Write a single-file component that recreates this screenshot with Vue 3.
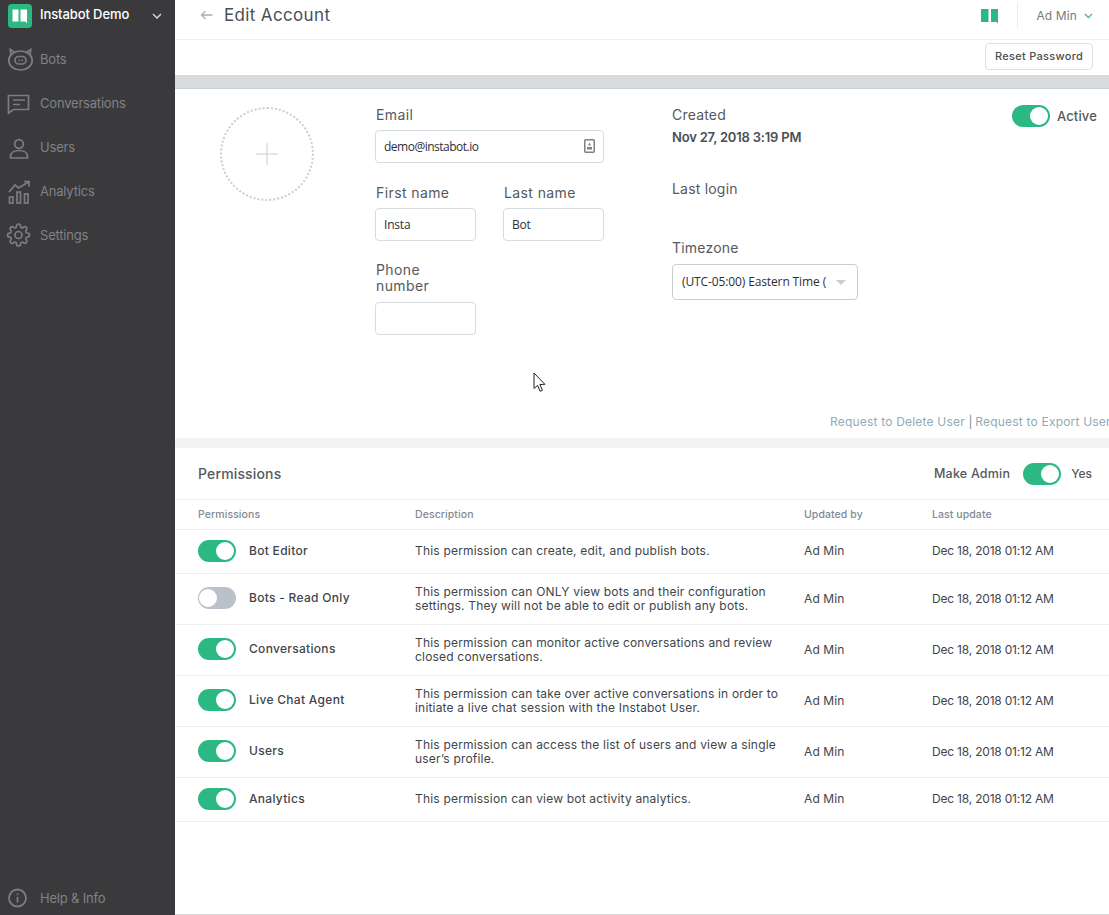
<script setup>
const nav = [
  { label: 'Bots', icon: 'bot' },
  { label: 'Conversations', icon: 'chat' },
  { label: 'Users', icon: 'user' },
  { label: 'Analytics', icon: 'chart' },
  { label: 'Settings', icon: 'gear' },
]
const rows = [
  { name: 'Bot Editor', on: true, h: 'short', desc: ['This permission can create, edit, and publish bots.'] },
  { name: 'Bots - Read Only', on: false, h: 'tall', desc: ['This permission can ONLY view bots and their configuration', 'settings. They will not be able to edit or publish any bots.'] },
  { name: 'Conversations', on: true, h: 'tall', desc: ['This permission can monitor active conversations and review', 'closed conversations.'] },
  { name: 'Live Chat Agent', on: true, h: 'tall', desc: ['This permission can take over active conversations in order to', 'initiate a live chat session with the Instabot User.'] },
  { name: 'Users', on: true, h: 'tall', desc: ['This permission can access the list of users and view a single', 'user\u2019s profile.'] },
  { name: 'Analytics', on: true, h: 'short', desc: ['This permission can view bot activity analytics.'] },
]
</script>

<template>
  <div class="app">
    <aside class="side">
      <div class="brand">
        <span class="logo">
          <svg width="24" height="24" viewBox="0 0 24 24">
            <rect width="24" height="24" rx="4" fill="#2cb883" />
            <path d="M4.500 5.500h6v12h-6zM12.500 5.500h6.500v14l-1.500-2h-5z" fill="#fff" />
          </svg>
        </span>
        <span class="brand-name">Instabot Demo</span>
        <svg class="brand-chev" width="10" height="6" viewBox="0 0 10 6"><path d="M1 1l4 4 4-4" fill="none" stroke="#d5d5d5" stroke-width="1.5" /></svg>
      </div>
      <nav class="nav">
        <a v-for="n in nav" :key="n.label" class="nav-item">
          <svg class="nav-ico" width="26" height="26" viewBox="0 0 26 26" fill="none" stroke="#7b7d7f" stroke-width="1.7">
            <template v-if="n.icon === 'bot'">
              <ellipse cx="14.500" cy="14.500" rx="11.700" ry="9.500" />
              <rect x="9" y="10.500" width="11" height="7.500" rx="3.700" />
              <path d="M4.800 8.500L4.300 3.500l4.200 2.800M24.200 8.500l.5-5-4.200 2.800" />
              <path d="M12.500 14.300h1.500M15.500 14.300H17" />
            </template>
            <template v-else-if="n.icon === 'chat'">
              <path d="M2.500 5.500h20v14H7.500l-5 3.500z" />
              <path d="M7 10h12M7 14.500h7" />
            </template>
            <template v-else-if="n.icon === 'user'">
              <circle cx="13" cy="10" r="4.300" />
              <path d="M4.500 24v-1.500c0-4 4-6 8.500-6s8.500 2 8.500 6V24z" />
            </template>
            <template v-else-if="n.icon === 'chart'">
              <path d="M3 14l6-7 3.500 3 10-6M18 3.500h5v5" />
              <rect x="3.500" y="19" width="3.500" height="6" />
              <rect x="11" y="14" width="3.500" height="11" />
              <rect x="18.500" y="16" width="3.500" height="9" />
            </template>
            <template v-else>
              <g transform="translate(.5 1)">
                <circle cx="12" cy="12" r="3.500" />
                <path d="M19.400 15a1.650 1.650 0 0 0 .33 1.820l.06.06a2 2 0 0 1 0 2.830 2 2 0 0 1-2.830 0l-.06-.06a1.650 1.650 0 0 0-1.820-.33 1.650 1.650 0 0 0-1 1.510V21a2 2 0 0 1-2 2 2 2 0 0 1-2-2v-.09A1.650 1.650 0 0 0 9 19.400a1.650 1.650 0 0 0-1.820.33l-.06.06a2 2 0 0 1-2.830 0 2 2 0 0 1 0-2.830l.06-.06a1.650 1.650 0 0 0 .33-1.820 1.650 1.650 0 0 0-1.510-1H3a2 2 0 0 1-2-2 2 2 0 0 1 2-2h.09A1.650 1.650 0 0 0 4.600 9a1.650 1.650 0 0 0-.33-1.820l-.06-.06a2 2 0 0 1 0-2.830 2 2 0 0 1 2.830 0l.06.06a1.650 1.650 0 0 0 1.820.33H9a1.650 1.650 0 0 0 1-1.510V3a2 2 0 0 1 2-2 2 2 0 0 1 2 2v.09a1.650 1.650 0 0 0 1 1.510 1.650 1.650 0 0 0 1.820-.33l.06-.06a2 2 0 0 1 2.830 0 2 2 0 0 1 0 2.830l-.06.06a1.650 1.650 0 0 0-.33 1.820V9a1.650 1.650 0 0 0 1.510 1H21a2 2 0 0 1 2 2 2 2 0 0 1-2 2h-.09a1.650 1.650 0 0 0-1.510 1z" />
              </g>
            </template>
          </svg>
          <span>{{ n.label }}</span>
        </a>
      </nav>
      <a class="nav-item help">
        <svg class="nav-ico" width="26" height="26" viewBox="0 0 26 26" fill="none" stroke="#7b7d7f" stroke-width="1.8">
          <circle cx="11.500" cy="13" r="8.500" />
          <path d="M11.500 12v5.500M11.500 8.500v1.600" />
        </svg>
        <span>Help &amp; Info</span>
      </a>
    </aside>

    <main class="main">
      <header class="top">
        <div class="title-wrap">
          <svg width="13" height="10" viewBox="0 0 13 10"><path d="M12.500 5H1.500M5.500 1l-4 4 4 4" fill="none" stroke="#a9afb3" stroke-width="1.300" /></svg>
          <h1 class="title">Edit Account</h1>
        </div>
        <div class="top-right">
          <svg class="top-logo" width="18" height="16" viewBox="0 0 18 16"><path d="M0 1h7.500v13H0zM10 1h7v14.500L15.500 14H10z" fill="#2cb883" /></svg>
          <div class="user-menu">
            <span>Ad Min</span>
            <svg width="9" height="6" viewBox="0 0 9 6"><path d="M1 1l3.500 3.500L8 1" fill="none" stroke="#4cb99b" stroke-width="1.400" /></svg>
          </div>
        </div>
      </header>

      <div class="actions">
        <button class="btn" type="button">Reset Password</button>
      </div>
      <div class="band"></div>

      <section class="profile">
        <div class="profile-grid">
          <div class="avatar">
            <svg width="22" height="22" viewBox="0 0 22 22"><path d="M11 0v22M0 11h22" stroke="#c8ced3" stroke-width="1" /></svg>
          </div>
          <div class="col-mid">
            <label class="field">
              <span class="lbl">Email</span>
              <span class="input wide">
                <span class="val">demo@instabot.io</span>
                <svg width="11" height="14" viewBox="0 0 11 14"><rect x=".75" y=".75" width="9.500" height="12.500" rx="1" fill="none" stroke="#7d8285" stroke-width="1.500" /><path d="M5.500 3.500l1.500 3H4zM3 8h5v2.500H3z" fill="#7d8285" /></svg>
              </span>
            </label>
            <div class="name-row">
              <label class="field narrow">
                <span class="lbl">First name</span>
                <span class="input"><span class="val">Insta</span></span>
              </label>
              <label class="field narrow">
                <span class="lbl">Last name</span>
                <span class="input"><span class="val">Bot</span></span>
              </label>
            </div>
            <label class="field narrow phone">
              <span class="lbl">Phone<br />number</span>
              <span class="input"></span>
            </label>
          </div>
          <div class="col-info">
            <div class="lbl">Created</div>
            <div class="strong">Nov 27, 2018 3:19 PM</div>
            <div class="lbl login">Last login</div>
            <div class="lbl tz">Timezone</div>
            <div class="select">
              <span class="sel-val">(UTC-05:00) Eastern Time (</span>
              <span class="caret"></span>
            </div>
          </div>
          <div class="col-active">
            <span class="toggle on"></span>
            <span class="active-lbl">Active</span>
          </div>
        </div>
        <div class="links">
          <a>Request to Delete User</a> <span class="pipe">|</span> <a>Request to Export User</a>
        </div>
        <svg class="cursor" width="14" height="21" viewBox="0 0 14 21"><path d="M1 1v15.500l3.600-3.200 2.500 6 2.300-1-2.500-5.800 5-.2z" fill="#fff" stroke="#222" stroke-width="1" /></svg>
      </section>

      <div class="gap"></div>

      <section class="perm">
        <div class="perm-head">
          <h2 class="perm-title">Permissions</h2>
          <div class="admin">
            <span class="admin-lbl">Make Admin</span>
            <span class="toggle on"></span>
            <span class="yes">Yes</span>
          </div>
        </div>
        <div class="row thead">
          <span>Permissions</span><span>Description</span><span>Updated by</span><span>Last update</span>
        </div>
        <div v-for="r in rows" :key="r.name" class="row body" :class="r.h">
          <span class="pname">
            <span class="toggle" :class="{ on: r.on }"></span>
            <span class="pn">{{ r.name }}</span>
          </span>
          <span class="desc"><span v-for="d in r.desc" :key="d" class="line">{{ d }}</span></span>
          <span class="by">Ad Min</span>
          <span class="date">Dec 18, 2018 01:12 AM</span>
        </div>
      </section>
    </main>
  </div>
</template>

<style scoped>
.app {
  display: flex;
  width: 1109px;
  height: 915px;
  overflow: hidden;
  font-family: Inter, "Noto Sans", sans-serif;
  color: #4a4f54;
  background: #fff;
}
.side {
  width: 175px;
  flex: none;
  background: #3a3a3c;
  display: flex;
  flex-direction: column;
}
.brand {
  height: 37px;
  display: flex;
  align-items: flex-start;
  padding: 4px 13px 0 8px;
  box-sizing: border-box;
}
.logo { height: 24px; }
.brand-name {
  margin-left: 8px;
  margin-top: 2px;
  font-size: 13px;
  font-weight: 500;
  color: #fff;
  flex: 1;
  letter-spacing: -.1px;
}
.brand-chev { margin-top: 9px; }
.nav { flex: 1; }
.nav-item {
  height: 44px;
  display: flex;
  align-items: center;
  padding-left: 6px;
  gap: 8px;
  font-size: 13px;
  letter-spacing: -.2px;
  color: #808285;
}
.nav-ico { overflow: visible; }
.help {
  height: 28px;
  padding-bottom: 3px;
}
.main {
  flex: 1;
  min-width: 0;
  display: flex;
  flex-direction: column;
  border-bottom: 1px solid #d5d5d5;
  box-sizing: border-box;
}
.top {
  height: 40px;
  flex: none;
  box-sizing: border-box;
  border-bottom: 1px solid #eeeff0;
  display: flex;
  justify-content: space-between;
  padding: 0 16px 0 25px;
}
.title-wrap { display: flex; align-items: center; gap: 11px; height: 30px; }
.title {
  margin: 0;
  font-size: 17px;
  font-weight: 400;
  letter-spacing: .35px;
  color: #4a4f54;
}
.top-right { display: flex; align-items: flex-start; height: 30px; padding-top: 2px; }
.top-logo { margin-top: 6px; }
.user-menu {
  margin-left: 18px;
  height: 27px;
  border-left: 1px solid #eeeff0;
  padding-left: 18px;
  display: flex;
  align-items: center;
  gap: 7px;
  font-size: 12px;
  letter-spacing: .12px;
  color: #777c80;
}
.actions {
  height: 35px;
  flex: none;
  box-sizing: border-box;
  display: flex;
  justify-content: flex-end;
  padding: 3px 16px 0 0;
}
.btn {
  width: 108px;
  height: 27px;
  border: 1px solid #dcdfe3;
  background: #fff;
  border-radius: 4px;
  font: 500 11px Inter, sans-serif;
  letter-spacing: .3px;
  color: #4a4f54;
  padding: 0 0 2px;
}
.band {
  height: 14px;
  flex: none;
  box-sizing: border-box;
  background: #d8dcdc;
  border-bottom: 1px solid #c9d0d6;
}
.profile {
  position: relative;
  height: 349px;
  flex: none;
  box-sizing: border-box;
}
.profile-grid {
  display: grid;
  grid-template-columns: 94px 229px 340px 1fr;
  padding: 18px 12px 0 45px;
}
.avatar {
  width: 90px;
  height: 90px;
  border: 2px dotted #ccd0d3;
  border-radius: 50%;
  display: flex;
  align-items: center;
  justify-content: center;
}
.col-mid {
  margin-left: 61px;
  width: 229px;
}
.col-mid .lbl { padding-left: 1px; letter-spacing: .4px; }
.col-info { margin-left: 129px; width: 200px; }
.col-active {
  display: flex;
  align-items: center;
  gap: 7px;
  justify-content: flex-end;
  align-self: start;
  margin-top: -2px;
  margin-left: -50px;
}
.field { display: block; }
.lbl {
  display: block;
  font-size: 14px;
  line-height: 16px;
  letter-spacing: .2px;
  color: #55595d;
}
.input {
  display: flex;
  align-items: center;
  justify-content: space-between;
  box-sizing: border-box;
  height: 33px;
  margin-top: 7px;
  border: 1px solid #d7dce1;
  border-radius: 4px;
  padding: 0 8px 1px;
  background: #fff;
}
.wide { width: 229px; }
.val {
  font-family: "Open Sans", sans-serif;
  font-size: 12px;
  letter-spacing: -.2px;
  color: #2c3036;
}
.wide .val { letter-spacing: -.5px; }
.name-row {
  display: flex;
  gap: 27px;
  margin-top: 22px;
}
.narrow { width: 101px; }
.phone { margin-top: 21px; }
.phone .input { margin-top: 8px; }
.strong {
  margin-top: 6px;
  font-size: 13px;
  font-weight: 600;
  line-height: 16px;
  letter-spacing: -.2px;
  color: #4a4f54;
}
.login { margin-top: 36px; }
.tz { margin-top: 43px; }
.select {
  margin-top: 8px;
  width: 186px;
  height: 36px;
  box-sizing: border-box;
  border: 1px solid #c6ced6;
  border-radius: 4px;
  display: flex;
  align-items: center;
  padding: 0 11px 2px 9px;
  justify-content: space-between;
}
.sel-val {
  font-family: "Open Sans", sans-serif;
  font-size: 12px;
  letter-spacing: -.12px;
  color: #2c3036;
  white-space: nowrap;
}
.caret {
  width: 0;
  height: 0;
  margin-top: 2px;
  border-left: 5px solid transparent;
  border-right: 5px solid transparent;
  border-top: 5px solid #c6ced2;
}
.active-lbl { font-size: 13px; font-weight: 500; letter-spacing: .15px; color: #55595d; }
.toggle {
  position: relative;
  display: inline-block;
  flex: none;
  width: 38px;
  height: 22px;
  border-radius: 11px;
  background: #bac1cb;
}
.toggle::after {
  content: "";
  position: absolute;
  top: 2px;
  left: 1px;
  width: 18px;
  height: 18px;
  border-radius: 50%;
  background: #fff;
}
.toggle.on { background: #2cb883; }
.toggle.on::after { left: 18px; }
.links {
  position: absolute;
  left: 655px;
  top: 325px;
  white-space: nowrap;
  font-size: 12px;
  letter-spacing: .2px;
  line-height: 16px;
  color: #8fabb8;
}
.pipe { color: #7d8a94; margin-right: -1px; }
.cursor { position: absolute; left: 358px; top: 283px; }
.gap { height: 10px; flex: none; background: #f4f4f4; }
.perm { flex: 1; }
.perm-head {
  height: 52px;
  box-sizing: border-box;
  border-bottom: 1px solid #eeeff0;
  display: flex;
  align-items: center;
  justify-content: space-between;
  padding: 0 17px 0 23px;
}
.perm-title { margin: 0; font-size: 14px; font-weight: 500; color: #55595d; letter-spacing: .15px; }
.admin { display: flex; align-items: center; }
.admin-lbl { font-size: 12.5px; font-weight: 500; letter-spacing: .2px; color: #55595d; margin-right: 13px; }
.yes { font-size: 12px; font-weight: 500; color: #55595d; margin-left: 10px; }
.row {
  display: grid;
  grid-template-columns: 217px 389px 128px 1fr;
  align-items: center;
  padding-left: 23px;
  box-sizing: border-box;
  border-bottom: 1px solid #eeeff0;
  font-size: 12px;
  color: #40454a;
}
.thead { height: 30px; font-size: 10.5px; font-weight: 500; letter-spacing: .08px; color: #7f8a93; }
.body { padding-bottom: 2px; }
.body.short { height: 44px; }
.body.tall { height: 51px; }
.pname { display: flex; align-items: center; gap: 13px; font-weight: 500; letter-spacing: .3px; color: #3f4549; }
.tall .pn { margin-top: -2px; }
.line { display: block; line-height: 14px; letter-spacing: .19px; }
.desc { display: block; }
.tall .desc { margin-top: 2px; }
.by { letter-spacing: .1px; }
.date { letter-spacing: -.2px; }
</style>

<style>
html, body { margin: 0; }
</style>
